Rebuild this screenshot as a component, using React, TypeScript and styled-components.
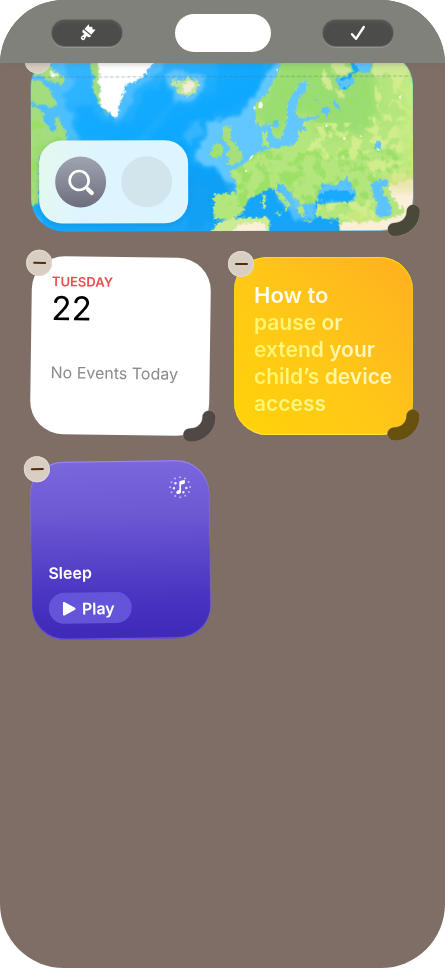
import React from "react";
import styled, { createGlobalStyle, css } from "styled-components";

const GlobalStyle = createGlobalStyle`
  *, *::before, *::after { box-sizing: border-box; }
  body { margin: 0; background: #fff; font-family: Inter, "Liberation Sans", sans-serif; }
  button { font: inherit; color: inherit; border: 0; padding: 0; margin: 0; cursor: pointer; }
  h2, p { margin: 0; }
`;

const Screen = styled.div`
  min-height: 100vh;
  background: #7f6e66;
  border-radius: 64px;
  overflow: hidden;
`;

const TopBar = styled.header`
  position: relative;
  z-index: 2;
  display: flex;
  align-items: center;
  justify-content: space-between;
  padding: 14px 52px 11px;
  background: #80817b;
  box-shadow: 0 1px 6px rgba(110, 106, 98, 0.35);
`;

const PillButton = styled.button`
  display: flex;
  align-items: center;
  justify-content: center;
  width: 70px;
  height: 26px;
  border-radius: 13px;
  color: #fff;
  background: #4c4d4a;
  box-shadow: 0 0 0 1px #6d6e69, 0 1px 0 1px #92948d, inset 0 2px 3px #575855;
`;

const Island = styled.div`
  width: 96px;
  height: 38px;
  border-radius: 19px;
  background: #fff;
`;

const WidgetGrid = styled.main`
  display: grid;
  grid-template-columns: repeat(2, minmax(0, 1fr));
  gap: 26px 24px;
  margin-top: -10px;
  padding: 0 32px 32px 31px;
`;

const Widget = styled.section<{ $wide?: boolean; $tilt?: number }>`
  position: relative;
  display: flex;
  min-height: 178px;
  ${(p) => p.$wide && css`grid-column: 1 / -1;`}
  ${(p) => p.$tilt && css`transform: rotate(${p.$tilt}deg);`}
`;

const face = css`
  flex: 1;
  min-width: 0;
  border-radius: 33px;
  overflow: hidden;
`;

const MapFace = styled.div`
  ${face}
  display: flex;
  align-items: flex-end;
  padding: 8px;
  position: relative;
  background: #16abfc;
`;

const MapDrawing = styled.svg`
  position: absolute;
  inset: 0;
  width: 100%;
  height: 100%;
`;

const MapTools = styled.div`
  position: relative;
  display: flex;
  gap: 15px;
  padding: 16px;
  border-radius: 23px;
  background: linear-gradient(100deg, #e5f8ee 0%, #def5ff 35%, #ddf5ff 100%);
  box-shadow: 0 2px 6px rgba(0, 80, 140, 0.2);
`;

const SearchButton = styled.button`
  display: flex;
  align-items: center;
  justify-content: center;
  width: 51px;
  height: 51px;
  border-radius: 50%;
  color: #fff;
  background: linear-gradient(#a0a4b1, #6d6e7d);
`;

const EmptySlot = styled.span`
  width: 51px;
  height: 51px;
  border-radius: 50%;
  background: #d2e5ed;
`;

const CalendarFace = styled.div`
  ${face}
  padding: 17px 20px;
  background: #fff;
`;

const Weekday = styled.h2`
  font-size: 13px;
  line-height: 16px;
  font-weight: 600;
  color: #ea4b50;
`;

const DayNumber = styled.p`
  font-size: 33px;
  line-height: 38px;
  color: #000;
`;

const Events = styled.p`
  margin-top: 35px;
  font-size: 16px;
  line-height: 20px;
  color: #8b8b8e;
  white-space: nowrap;
`;

const TipFace = styled.div`
  ${face}
  padding: 25px 16px 16px 20px;
  font-size: 21px;
  line-height: 27px;
  font-weight: 600;
  background: linear-gradient(50deg, #ffd00c 10%, #ffc817 45%, #ffb41f 90%);
  box-shadow: inset 0 1px 1px #ffe100, inset 0 -1px 1px #ffe83a;
`;

const TipText = styled.p<{ $lead?: boolean }>`
  color: transparent;
  white-space: nowrap;
  font-size: ${(p) => (p.$lead ? "22px" : "21px")};
  background: ${(p) =>
    p.$lead
      ? "linear-gradient(90deg, #ffffff 10%, #fff8ce 65%)"
      : "linear-gradient(90deg, #fff56d 0%, #fff780 42%, #fff8b8 68%, #fff6bb 100%)"};
  background-clip: text;
  -webkit-background-clip: text;
`;

const SleepFace = styled.div`
  ${face}
  display: flex;
  flex-direction: column;
  align-items: flex-start;
  padding: 15px 17px 16px;
  color: #fff;
  background: linear-gradient(#7a66dd 0%, #6d59d2 30%, #4935c1 75%, #3e29b8 100%);
  box-shadow: inset 0 1px 1px #a18df0, inset 0 -1px 1px #765cf4;
`;

const Station = styled.h2`
  margin-top: auto;
  font-size: 16px;
  line-height: 20px;
  font-weight: 600;
`;

const SoundMark = styled.svg`
  align-self: flex-end;
`;

const PlayButton = styled.button`
  display: flex;
  align-items: center;
  gap: 6px;
  height: 31px;
  margin-top: 10px;
  padding: 0 17px 0 14px;
  border-radius: 16px;
  font-size: 16px;
  font-weight: 600;
  background: #6354da;
`;

const RemoveButton = styled.button`
  position: absolute;
  left: -6px;
  top: -6px;
  display: flex;
  align-items: center;
  justify-content: center;
  width: 26px;
  height: 26px;
  border-radius: 50%;
  background: #d9cec2;
  box-shadow: inset 0 0 1px 1px #e2d9ce;

  &::before {
    content: "";
    width: 13px;
    height: 2px;
    border-radius: 1px;
    background: #4e2c0c;
  }
`;

const ResizeButton = styled.button<{ $tone: string }>`
  position: absolute;
  right: -7px;
  bottom: -6px;
  width: 33px;
  height: 32px;
  background: none;
  color: ${(p) => p.$tone};
`;

const Remove = ({ name }: { name: string }) => <RemoveButton aria-label={`Remove ${name}`} />;

const Resize = ({ name, tone }: { name: string; tone: string }) => (
  <ResizeButton $tone={tone} aria-label={`Resize ${name}`}>
    <svg width="33" height="32" viewBox="0 0 33 32" fill="none" strokeLinecap="round">
      <path d="M26 7C26 17 18 25 7 25" stroke="#9a8c7c" strokeOpacity="0.6" strokeWidth="14" />
      <path d="M26 7C26 17 18 25 7 25" stroke="currentColor" strokeWidth="13" />
    </svg>
  </ResizeButton>
);

const BrushIcon = () => (
  <svg width="18" height="18" viewBox="0 0 18 18" fill="none">
    <g transform="rotate(40 9 9)">
      <path d="M4.600 7.600V1.200l2.400 1.500 2-2 1.800 1.900L13.400 1v6.600z" fill="#fff" />
      <path
        d="M4 8.700h10v.9c0 1-.7 1.800-1.700 1.800h-1.700l.7 3.900a2.200 2.200 0 1 1-4.400 0l.7-3.900H5.700c-1 0-1.700-.8-1.700-1.800z"
        fill="#fff"
      />
      <circle cx="9.1" cy="15.1" r=".8" fill="#4c4d4a" />
    </g>
  </svg>
);

const CheckIcon = () => (
  <svg width="18" height="18" viewBox="0 0 18 18" fill="none">
    <path d="M3 10.200 7 14.800 14.800 3" stroke="#fff" strokeWidth="2.400" strokeLinecap="round" strokeLinejoin="round" />
  </svg>
);

const SearchIcon = () => (
  <svg width="28" height="28" viewBox="0 0 28 28" fill="none" stroke="#fff" strokeLinecap="round">
    <circle cx="12" cy="12" r="9.5" strokeWidth="2.6" />
    <path d="m19 19 1.5 1.5" strokeWidth="3" />
    <path d="m21 21 3.6 3.6" strokeWidth="4.2" />
  </svg>
);

const ring = (count: number, radius: number, shift: number) =>
  Array.from({ length: count }, (_, i) => {
    const a = ((i + shift) / count) * Math.PI * 2;
    return { x: 12 + Math.cos(a) * radius, y: 12 + Math.sin(a) * radius };
  });

const SoundIcon = () => (
  <SoundMark width="24" height="24" viewBox="0 0 24 24" fill="#fff">
    {ring(12, 10, 0).map((d, i) => (
      <circle key={i} cx={d.x} cy={d.y} r="1" opacity="0.55" />
    ))}
    <circle cx="5.8" cy="13" r="1.2" opacity="0.9" />
    <circle cx="18.2" cy="13" r="1.2" opacity="0.9" />
    <circle cx="7.4" cy="8" r="1.3" opacity="0.9" />
    <circle cx="15.2" cy="17.2" r="1.2" opacity="0.9" />
    <path d="M11.2 6.9c0-.5.3-.8.8-1l4-1.1c.5-.1.8.1.8.6v2.4c0 .5-.3.8-.7.9l-3.2.9v7c0 1.300-1.100 2.200-2.800 2.200-1.200 0-2-.6-2-1.600 0-1.200 1-2 2.200-2.200l.9-.3z" />
  </SoundMark>
);

const EUROPE =
  "M210 20L180 90L160 130L120 165L120 215L140 232L165 215L178 262L200 268L214 220L218 160L240 120L262 92L284 100L272 126L250 150L244 192L262 206L318 196L304 210L262 214L276 246L252 244L246 282L200 292L160 298L118 314L86 344L40 366L60 388L66 428L-5 432L-5 506L52 510L78 490L100 450L138 428L160 416L176 418L196 452L214 464L206 484L212 486L228 466L190 424L184 402L206 410L234 446L246 478L264 508L272 490L256 464L300 462L312 428L322 398L356 410L396 384L420 428L416 454L372 458L308 464L302 498L330 508L372 506V570H640V20H480L460 70L440 62L412 76L404 112L388 124L360 92L390 78L416 66L400 20z";

const NorthAtlanticMap = () => (
  <MapDrawing viewBox="0 0 1146 534" preserveAspectRatio="none" aria-hidden="true">
    <defs>
      <filter id="coast" x="-5%" y="-5%" width="110%" height="110%" colorInterpolationFilters="sRGB">
        <feTurbulence type="fractalNoise" baseFrequency="0.09" numOctaves="3" seed="7" />
        <feDisplacementMap in="SourceGraphic" scale="20" xChannelSelector="R" yChannelSelector="G" />
      </filter>
      <filter id="shelf" x="-5%" y="-5%" width="110%" height="110%" colorInterpolationFilters="sRGB">
        <feTurbulence type="fractalNoise" baseFrequency="0.03" numOctaves="3" seed="3" />
        <feDisplacementMap in="SourceGraphic" scale="36" xChannelSelector="R" yChannelSelector="G" />
        <feGaussianBlur stdDeviation="5" />
      </filter>
      <filter id="woods" x="0" y="0" width="100%" height="100%" colorInterpolationFilters="sRGB">
        <feTurbulence type="fractalNoise" baseFrequency="0.03" numOctaves="4" seed="12" />
        <feColorMatrix values="0 0 0 0 0.6  0 0 0 0 0.87  0 0 0 0 0.4  9 0 0 0 -4.500" result="n" />
        <feComposite in="n" in2="SourceGraphic" operator="in" />
      </filter>
      <filter id="dry" x="0" y="0" width="100%" height="100%" colorInterpolationFilters="sRGB">
        <feTurbulence type="fractalNoise" baseFrequency="0.03" numOctaves="5" seed="21" />
        <feColorMatrix values="0 0 0 0 0.82  0 0 0 0 0.93  0 0 0 0 0.55  0 10 0 0 -5" result="n" />
        <feComposite in="n" in2="SourceGraphic" operator="in" />
      </filter>
      <filter id="soft" x="-10%" y="-10%" width="120%" height="120%">
        <feGaussianBlur stdDeviation="12" />
      </filter>
      <clipPath id="europe">
        <path d={EUROPE} />
      </clipPath>
      <linearGradient id="sea" x1="0" x2="1" y1="0" y2="1">
        <stop offset="0" stopColor="#3cbaff" />
        <stop offset="0.4" stopColor="#16abfe" />
        <stop offset="1" stopColor="#14a2f8" />
      </linearGradient>
    </defs>
    <rect width="1146" height="534" fill="url(#sea)" />

    {/* continental shelves */}
    <g filter="url(#shelf)">
      <g transform="translate(-33 -9)" fill="#5ac2ff">
        <path d="M20 0H240L215 110L285 215L325 190L350 110L430 60V0H150L140 60L155 100L130 130L145 190L180 280H30z" opacity="0.75" />
        <path d="M435 70L500 60L560 80L555 125L500 155L460 140z" />
        <path d="M490 270L500 215L540 205L548 240L505 290z" opacity="0.45" />
        <path d="M350 270L420 190L470 150L445 200L385 265z" opacity="0.3" />
        <path d="M40 530V470L70 540z" />
      </g>
      <g transform="translate(552 -9)" fill="#62c7ff">
        <path d="M200 20L130 110L100 170L50 200L-10 215L-45 265L-60 310L-40 350L10 370L30 400L65 440L100 430L300 300L340 60z" />
        <path d="M150 395L200 400L260 450L300 440V510L240 510L180 430zM310 370H430V450H310z" opacity="0.75" />
      </g>
    </g>

    {/* deep water */}
    <g filter="url(#shelf)">
      <path
        d="M130 150L180 160L240 220L300 210L340 120L400 80L420 150L480 160L560 110L560 30L700 20L680 110L600 170L500 200L420 290L500 330L570 360L610 400L560 420L470 390V250H150z"
        fill="#06a5ff"
        opacity="0.55"
      />
      <path d="M480 340L560 370L615 400L600 440L550 500L470 540V400z" fill="#0f9bf0" opacity="0.6" />
    </g>

    <g filter="url(#coast)">
      {/* North America */}
      <g transform="translate(-33 -9)" fill="#a4dd7d">
        <path d="M10 90L60 88L85 110L100 140L112 160L98 172L70 158L52 165L10 135z" />
        <path d="M85 40L105 62L136 82L126 108L108 92L85 96L60 72L40 78V40z" />
        <path d="M10 160L50 168L70 188L74 214L100 245L108 240L104 204L116 200L130 236L140 248L138 290L60 320L55 460L10 466z" />
        <path d="M90 64L112 70L108 82L92 74z" fill="#fff" />
        <path d="M205 20H245L238 110L258 150L280 190L262 188L238 160L218 112L222 80z" />
      </g>
      {/* Greenland */}
      <path
        transform="translate(-33 -9)"
        d="M232 0H425L395 45L370 80L335 98L318 104L312 130L298 160L290 206L278 196L264 180L244 170L236 130L246 110L230 96L240 78z"
        fill="#fff"
      />
      {/* Iceland */}
      <g transform="translate(-33 -9)">
        <path d="M455 88L470 86L478 98L500 85L528 88L540 104L524 128L498 140L470 128L474 112L456 108z" fill="#bfe59a" />
        <path d="M490 102L512 94L530 104L512 124L500 132L488 118z" fill="#f4ecd8" />
      </g>
      {/* British Isles and continental Europe */}
      <g transform="translate(552 -9)">
        <path d={EUROPE} fill="#b3e67c" />
        <path d="M24 226L50 230L46 262L68 290L84 316L76 338L32 346L46 326L30 314L46 296L24 268z" fill="#a8df7c" />
        <path d="M-2 282L20 280L24 310L0 328L-16 314z" fill="#a2e076" />
        <path d="M140 248L158 244L156 270L164 290L146 290z" fill="#b2e67b" />
        <path d="M142 434L152 438L150 478L140 474zM176 490L200 490L198 502zM268 512L290 514L280 520zM338 516L356 516L346 524z" fill="#bfe782" />
        <path d="M-30 570L10 514L70 504L162 502L166 570z" fill="#cdea94" />
        <path d="M40 570L66 526L130 516L152 524L160 570z" fill="#fbefd8" />
        <path d="M368 570L380 520L430 510L470 512L510 512L570 490L530 440L518 410L560 395L640 385V570z" fill="#fbeeda" />
        <path d="M396 488L440 470L486 494L500 514L430 520L390 510z" fill="#c6e87e" />
      </g>
    </g>

    {/* vegetation */}
    <g transform="translate(552 -9)" clipPath="url(#europe)">
      <path
        d="M200 20L150 140L120 200L190 270L230 180L300 210L310 260L370 260L450 250L490 200L480 20z"
        fill="#93da70"
        opacity="0.75"
        filter="url(#soft)"
      />
      <path d="M0 300H600V380L520 400L440 470H0z" filter="url(#woods)" opacity="0.85" />
      <path d="M480 40H600V390L520 400L470 380L440 300L450 200L480 180zM260 220L450 220L460 330L280 330zM280 460L500 450V510L310 510z" filter="url(#dry)" />
      <path d="M100 60H460V230H100z" filter="url(#woods)" opacity="0.5" />
      <path
        d="M480 20H600V62L560 76L520 70L490 82L470 76zM325 60L346 90L352 124L376 118L390 138L384 152L360 124L336 118L318 88zM350 40H390L410 64L380 80L352 66z"
        fill="#cfe994"
        filter="url(#coast)"
      />
      <path d="M550 120L575 80L600 90V370L555 360L565 300L545 250L570 190z" fill="#c6ec84" opacity="0.7" filter="url(#coast)" />
      <path d="M500 385L600 360V430L520 420z" fill="#dde08a" opacity="0.6" filter="url(#soft)" />
    </g>
    <path transform="translate(-33 -9)" d="M35 190L60 215L100 250L125 265V300H60V450H35z" filter="url(#woods)" />

    {/* inland seas and lakes */}
    <g transform="translate(552 -9)" filter="url(#coast)" fill="#5cc3ff">
      <path d="M312 420L340 404L364 412L394 386L398 408L420 440L412 456L370 448L336 456L308 448z" />
      <path d="M312 436L340 420L370 424L404 426L420 442L404 456L368 450L330 456L308 450z" fill="#18aaff" />
      <path d="M468 404L500 388L520 394L516 412L498 416L512 442L526 462L526 498L500 506L482 492L486 460L468 430z" />
      <path d="M320 176L338 170L348 188L334 200L320 190zM356 152L370 162L376 182L360 172zM298 146L310 148L308 158zM174 220L190 210L192 230L180 236zM488 272L496 284L484 308L478 294zM420 96L404 112L374 116L362 86L384 94L412 84zM404 28L440 66L462 72L480 28z" />
      <path d="M268 464L296 464L296 510L276 508zM186 406L206 408L262 470L236 478z" opacity="0.8" />
    </g>
    <g transform="translate(552 -9)" fill="#fff">
      <path
        d="M132 160l8-6 4 12-4 10-10-2zM108 318l8-4-6 12-8 4zM384 264h8v6h-8zM552 142l8-6-4 14zM116 170h5v8h-5zM90 360h6v5h-6zM434 256l8 6h-6zM184 60l6-4-2 10zM486 298h7v5h-7zM332 224h5v8h-5z"
        opacity="0.9"
      />
    </g>
    <path d="M0 71H1146" stroke="#58758a" strokeOpacity="0.5" strokeWidth="3" strokeDasharray="10 7" />
  </MapDrawing>
);

export default function App() {
  return (
    <>
      <GlobalStyle />
      <Screen>
        <TopBar>
          <PillButton aria-label="Customize">
            <BrushIcon />
          </PillButton>
          <Island />
          <PillButton aria-label="Done">
            <CheckIcon />
          </PillButton>
        </TopBar>

        <WidgetGrid>
          <Widget $wide $tilt={-0.2} aria-label="Maps">
            <MapFace>
              <NorthAtlanticMap />
              <MapTools>
                <SearchButton aria-label="Search maps">
                  <SearchIcon />
                </SearchButton>
                <EmptySlot />
              </MapTools>
            </MapFace>
            <Remove name="Maps" />
            <Resize name="Maps" tone="#4a4839" />
          </Widget>

          <Widget $tilt={0.8} aria-label="Calendar">
            <CalendarFace>
              <Weekday>TUESDAY</Weekday>
              <DayNumber>22</DayNumber>
              <Events>No Events Today</Events>
            </CalendarFace>
            <Remove name="Calendar" />
            <Resize name="Calendar" tone="#4f4844" />
          </Widget>

          <Widget aria-label="Tips">
            <TipFace>
              <TipText $lead>How to</TipText>
              <TipText>
                pause or
                <br />
                extend your
                <br />
                child’s device
                <br />
                access
              </TipText>
            </TipFace>
            <Remove name="Tips" />
            <Resize name="Tips" tone="#68500e" />
          </Widget>

          <Widget $tilt={-0.8} aria-label="Ambient Music">
            <SleepFace>
              <SoundIcon />
              <Station>Sleep</Station>
              <PlayButton>
                <svg width="13" height="14" viewBox="0 0 13 14" fill="#fff" aria-hidden="true">
                  <path d="M0 1.300C0 .3.9-.2 1.800.3l10.400 5.700c.9.500.9 1.500 0 2L1.800 13.700C.9 14.200 0 13.700 0 12.700z" />
                </svg>
                Play
              </PlayButton>
            </SleepFace>
            <Remove name="Ambient Music" />
          </Widget>
        </WidgetGrid>
      </Screen>
    </>
  );
}
